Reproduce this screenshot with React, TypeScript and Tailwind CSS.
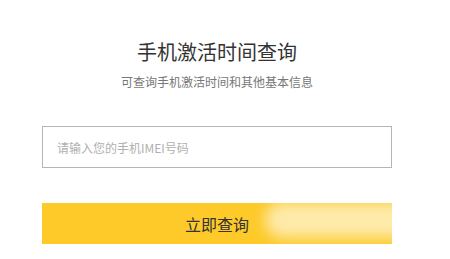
export default function App() {
  return (
    <div
      className="relative w-[450px] h-[259px] overflow-hidden bg-white"
      style={{ fontFamily: '"Noto Sans CJK SC", "Liberation Sans", sans-serif' }}
    >
      <div className="flex flex-col items-center pt-[38px] pl-[42px] w-[392px]">
        <h1 className="text-[20px] leading-[28px] text-[#333]">手机激活时间查询</h1>
        <p className="mt-[8px] text-[12px] leading-[16px] text-[#777]">可查询手机激活时间和其他基本信息</p>
        <input
          className="mt-[36px] w-[350px] h-[42px] border border-[#b5b5b5] px-[14px] text-[12px] text-[#333] placeholder:text-[#b0b0b0] outline-none"
          placeholder="请输入您的手机IMEI号码"
        />
        <button className="mt-[35px] w-[350px] h-[41px] bg-[#fdca2a] text-[16px] text-[#333]">
          立即查询
        </button>
      </div>
      {/* watermark smudge */}
      <div className="absolute left-[265px] top-[202px] w-[180px] h-[36px] bg-white/60 blur-[7px] rounded-full" />
    </div>
  );
}
